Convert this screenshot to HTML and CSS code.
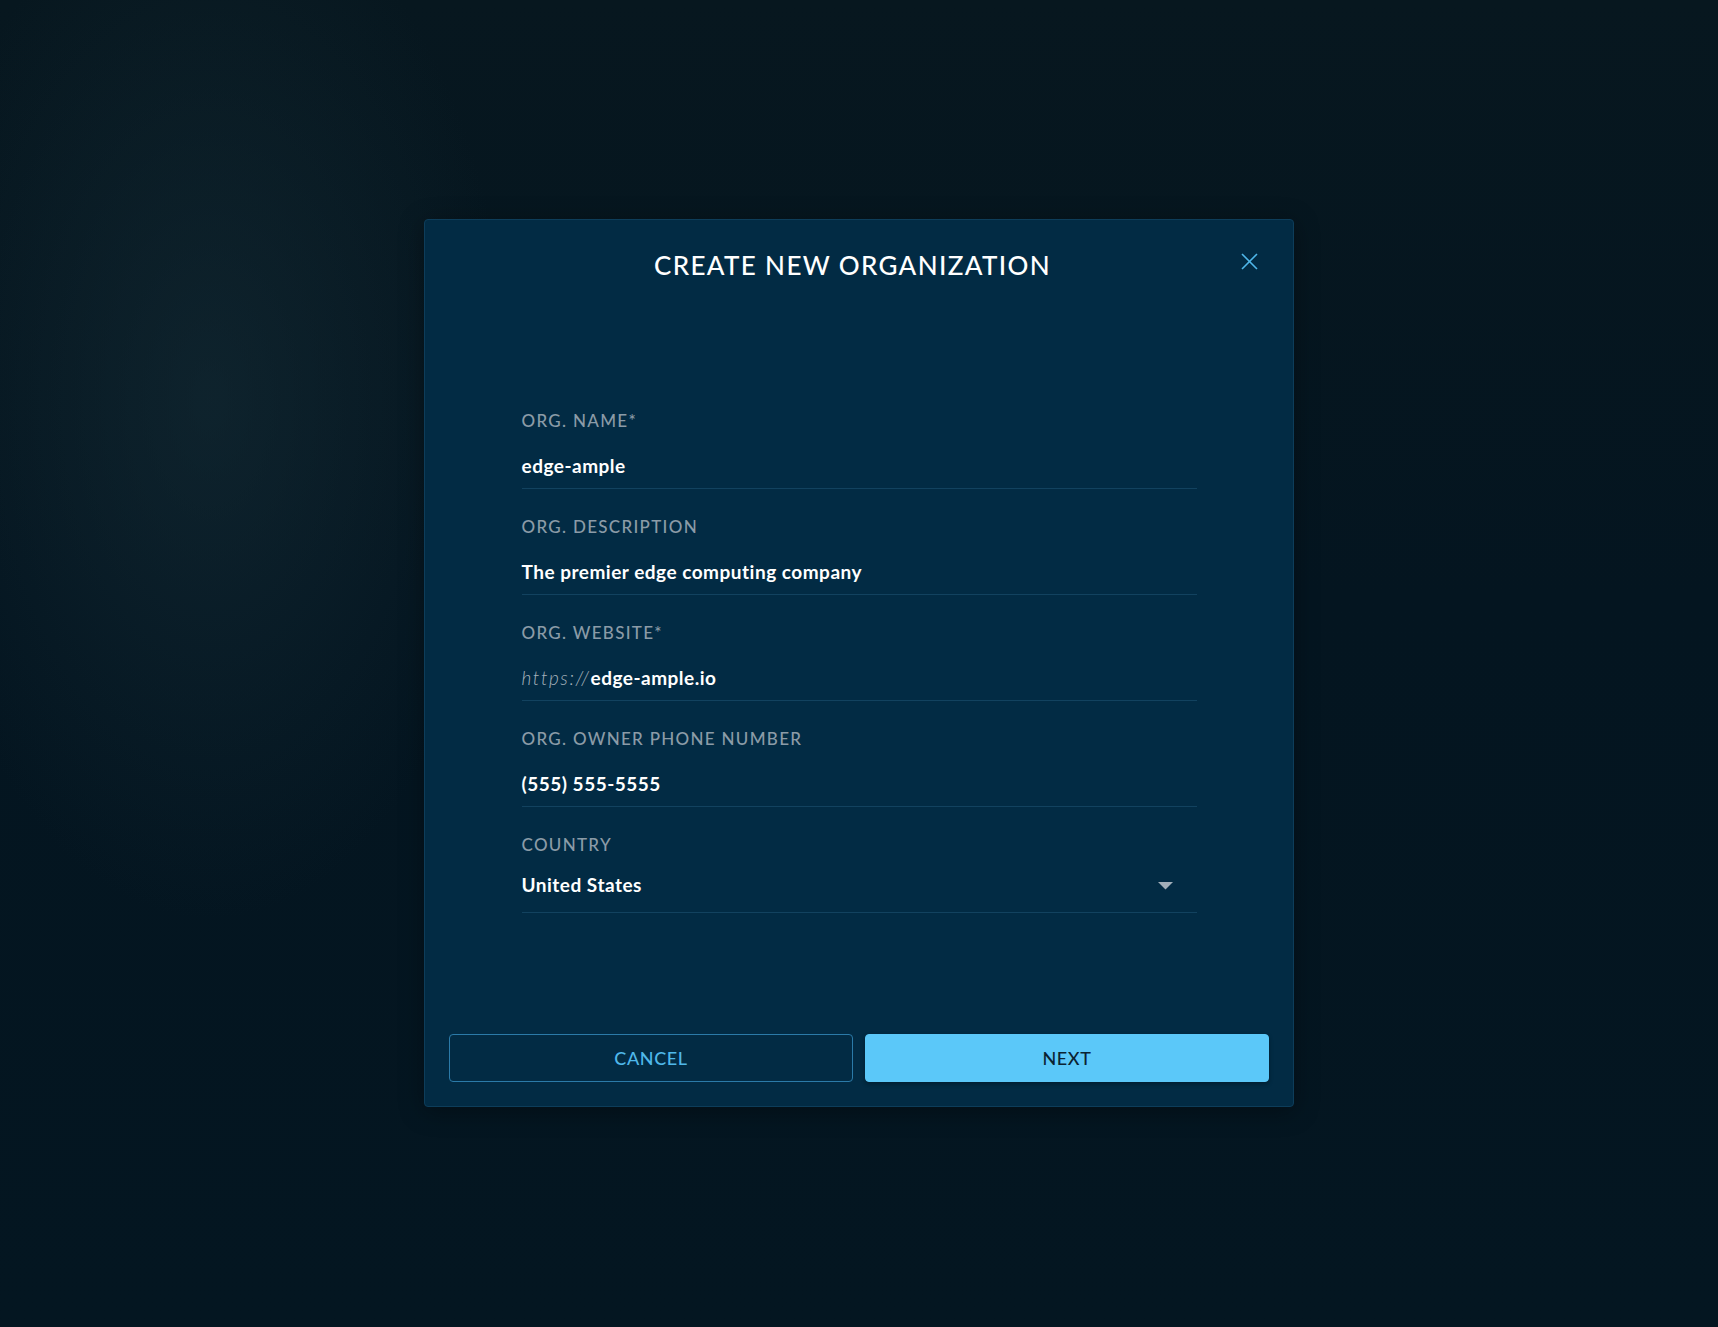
FILE: index.html
```html
<!DOCTYPE html>
<html lang="en">
<head>
<meta charset="utf-8">
<title>Create New Organization</title>
<link rel="stylesheet" href="styles.css">
</head>
<body>
<div class="backdrop">
  <div class="dialog">
    <div class="dialog-header">
      <h1 class="dialog-title">CREATE NEW ORGANIZATION</h1>
      <button class="close-btn" aria-label="Close">
        <svg width="17" height="17" viewBox="0 0 17 17"><path d="M1 1 L16 16 M16 1 L1 16" stroke="#4fb6e9" stroke-width="1.6" fill="none"/></svg>
      </button>
    </div>
    <form class="form">
      <div class="field">
        <div class="field-label">ORG. NAME*</div>
        <div class="field-value">edge-ample</div>
      </div>
      <div class="field">
        <div class="field-label">ORG. DESCRIPTION</div>
        <div class="field-value">The premier edge computing company</div>
      </div>
      <div class="field">
        <div class="field-label">ORG. WEBSITE*</div>
        <div class="field-value"><span class="prefix">https://</span>edge-ample.io</div>
      </div>
      <div class="field">
        <div class="field-label">ORG. OWNER PHONE NUMBER</div>
        <div class="field-value">(555) 555-5555</div>
      </div>
      <div class="field field-select">
        <div class="field-label">COUNTRY</div>
        <div class="field-value select-value">
          <span>United States</span>
          <svg class="caret" width="15" height="8" viewBox="0 0 15 8"><path d="M0 0 H15 L7.5 7.5 Z" fill="#a2afba"/></svg>
        </div>
      </div>
    </form>
    <div class="actions">
      <button class="btn btn-cancel" type="button">CANCEL</button>
      <button class="btn btn-next" type="button">NEXT</button>
    </div>
  </div>
</div>
</body>
</html>
```

FILE: styles.css
```css
* { box-sizing: border-box; }

html, body {
  margin: 0;
  padding: 0;
  height: 100%;
}

body {
  font-family: "Lato", "Liberation Sans", sans-serif;
  background-color: #041520;
  background-image:
    radial-gradient(ellipse 300px 520px at 210px 400px, rgba(22, 46, 56, 0.55), rgba(22, 46, 56, 0) 100%),
    linear-gradient(180deg, #07171f 0%, #041520 45%, #041621 100%);
  color: #fff;
}

.backdrop {
  min-height: 1327px;
  display: flex;
  justify-content: center;
  align-items: flex-start;
  padding-top: 219px;
}

.dialog {
  position: relative;
  width: 870px;
  height: 888px;
  background: #022b44;
  border: 1px solid #0d3d5a;
  border-radius: 4px;
  padding: 32px 24px 24px;
  display: flex;
  flex-direction: column;
  box-shadow: 0 4px 24px rgba(0, 0, 0, 0.35);
}

.dialog-header {
  display: flex;
  justify-content: center;
}

.dialog-title {
  margin: 0 13px 0 0;
  flex: 1;
  text-align: center;
  font-size: 26px;
  line-height: 26px;
  font-weight: 500;
  letter-spacing: 1.35px;
  color: #ffffff;
}

.close-btn {
  position: absolute;
  top: 33px;
  right: 35px;
  width: 17px;
  height: 17px;
  padding: 0;
  border: 0;
  background: transparent;
  display: block;
}
.close-btn svg { display: block; }

.form {
  width: 675px;
  margin: 105px auto 0;
}

.field {
  padding: 28px 0 10px;
  border-bottom: 1px solid #12425f;
}

.field-label {
  font-size: 17px;
  line-height: 20px;
  font-weight: 500;
  letter-spacing: 1.3px;
  color: #8b9ba7;
}

.field-value {
  margin-top: 23px;
  font-size: 19px;
  line-height: 24px;
  font-weight: 700;
  letter-spacing: 0.5px;
  color: #ffffff;
}

.prefix {
  font-weight: 300;
  font-style: italic;
  letter-spacing: 1.6px;
  color: #a7b3bc;
}

.field-select .select-value {
  margin-top: 18px;
  display: flex;
  align-items: center;
  justify-content: space-between;
  padding-right: 24px;
  padding-bottom: 5px;
}
.caret { display: block; margin-top: 1px; }

.actions {
  margin-top: auto;
  display: flex;
  gap: 12px;
}

.btn {
  flex: 1;
  height: 48px;
  border-radius: 4px;
  font-family: "Lato", "Liberation Sans", sans-serif;
  font-size: 18px;
  font-weight: 500;
  letter-spacing: 0.6px;
  cursor: pointer;
}

.btn-cancel {
  background: transparent;
  border: 1px solid #2b7aa8;
  color: #4fb8ea;
}

.btn-next {
  background: #5bc8f9;
  border: 1px solid #5bc8f9;
  color: #0b2333;
  box-shadow: 0 2px 4px rgba(0, 0, 0, 0.3);
}
```
